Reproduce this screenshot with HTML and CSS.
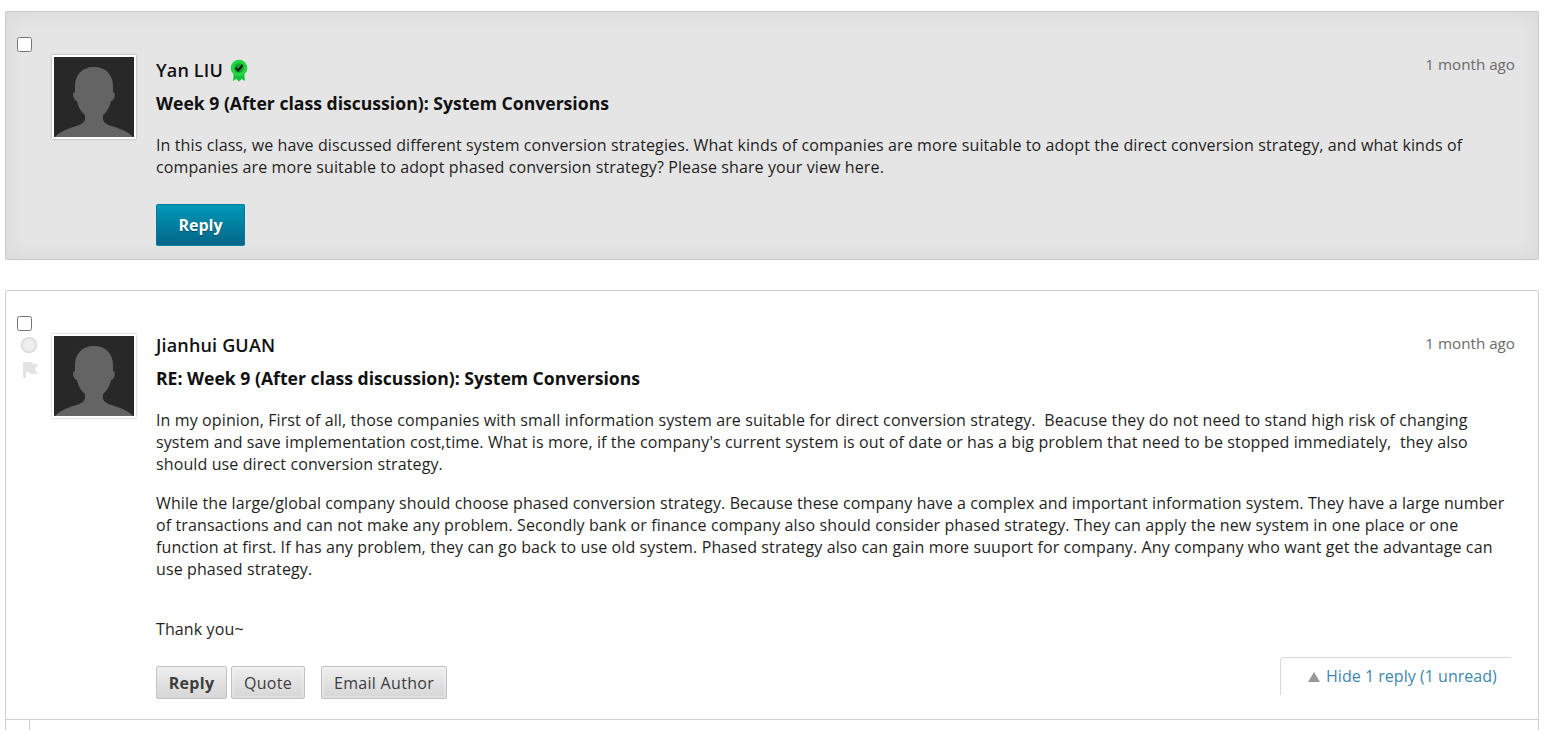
FILE: index.html
```html
<!DOCTYPE html>
<html lang="en">
<head>
<meta charset="utf-8">
<title>Discussion thread</title>
<link rel="stylesheet" href="styles.css">
</head>
<body>
<main class="thread">
  <article class="post post-main">
    <div class="controls"><input type="checkbox" class="check" aria-label="Select post"></div>
    <div class="avatar">
      <svg viewBox="0 0 80 80" width="80" height="80" aria-hidden="true"><rect width="80" height="80" fill="#282828"/><path fill="#646464" d="M40 10C28 10 21 18 21 29V35C19 35 19 38 19.500 40C20 42 21.500 44 23 44C24 50 28 56 31 58V62C31 65 28 67 24 68.500C16 71 6 74 1 80H79C74 74 64 71 56 68.500C52 67 49 65 49 62V58C52 56 56 50 57 44C58.500 44 60 42 60.500 40C61 38 61 35 59 35V29C59 18 52 10 40 10Z"/></svg>
    </div>
    <div class="body">
      <header class="head">
        <h2 class="author">Yan LIU
          <svg class="badge" viewBox="0 0 18 22" width="18" height="23" aria-hidden="true"><path fill="#14c23a" d="M4 12l-1 9.500 3.500-2 2.500 2.500 2.500-2.500 3.500 2-1-9.500z"/><circle cx="9" cy="8.500" r="8.300" fill="#1fd63f"/><circle cx="9" cy="8.500" r="4.800" fill="#14a436"/><path fill="none" stroke="#0c2414" stroke-width="2.400" d="M5.600 8.200l2.600 2.800 4.400-5.600"/></svg>
        </h2>
        <time class="ago">1 month ago</time>
      </header>
      <h3 class="subject">Week 9 (After class discussion): System Conversions</h3>
      <div class="text">
        <p>In this class, we have discussed different system conversion strategies. What kinds of companies are more suitable to adopt the direct conversion strategy, and what kinds of companies are more suitable to adopt phased conversion strategy? Please share your view here.</p>
      </div>
      <div class="actions"><button class="btn-primary" type="button">Reply</button></div>
    </div>
  </article>

  <article class="post post-reply">
    <div class="post-row">
      <div class="controls">
        <input type="checkbox" class="check" aria-label="Select post">
        <span class="dot"></span>
        <svg class="flag" viewBox="0 0 16 16" width="16" height="16" aria-hidden="true"><path fill="#e4e4e4" d="M1 0h9l1 2h5l-3 5 3 5H8l-1-2H4v6H1z"/></svg>
      </div>
      <div class="avatar">
        <svg viewBox="0 0 80 80" width="80" height="80" aria-hidden="true"><rect width="80" height="80" fill="#282828"/><path fill="#646464" d="M40 10C28 10 21 18 21 29V35C19 35 19 38 19.500 40C20 42 21.500 44 23 44C24 50 28 56 31 58V62C31 65 28 67 24 68.500C16 71 6 74 1 80H79C74 74 64 71 56 68.500C52 67 49 65 49 62V58C52 56 56 50 57 44C58.500 44 60 42 60.500 40C61 38 61 35 59 35V29C59 18 52 10 40 10Z"/></svg>
      </div>
      <div class="body">
        <header class="head">
          <h2 class="author">Jianhui GUAN</h2>
          <time class="ago">1 month ago</time>
        </header>
        <h3 class="subject">RE: Week 9 (After class discussion): System Conversions</h3>
        <div class="text">
          <p>In my opinion, First of all, those companies with small information system are suitable for direct conversion strategy.&nbsp; Beacuse they do not need to stand high risk of changing system and save implementation cost,time. What is more, if the company's current system is out of date or has a big problem that need to be stopped immediately,&nbsp; they also should use direct conversion strategy.</p>
          <p>While the large/global company should choose phased conversion strategy. Because these company have a complex and important information system. They have a large number of transactions and can not make any problem. Secondly bank or finance company also should consider phased strategy. They can apply the new system in one place or one function at first. If has any problem, they can go back to use old system. Phased strategy also can gain more suuport for company. Any company who want get the advantage can use phased strategy.</p>
          <p class="thanks">Thank you~</p>
        </div>
        <div class="foot">
          <div class="buttons">
            <button class="btn btn-strong" type="button">Reply</button>
            <button class="btn btn-quote" type="button">Quote</button>
            <button class="btn btn-email" type="button">Email Author</button>
          </div>
          <a class="toggle" href="#"><span class="arrow"></span>Hide 1 reply (1 unread)</a>
        </div>
      </div>
    </div>
    <div class="child"><span class="child-line"></span></div>
  </article>
</main>
</body>
</html>
```
FILE: styles.css
```css
* { box-sizing: border-box; }
html, body { margin: 0; height: 730px; overflow: hidden; background: #fff; }
body { font-family: "Open Sans", "Liberation Sans", sans-serif; font-size: 16px; line-height: 22px; letter-spacing: .115px; color: #1f1f1f; }
.thread { padding: 11px 9px 0 5px; display: flex; flex-direction: column; gap: 30px; }
.post { border: 1px solid #cfcfcf; border-radius: 2px; }
.post-main { display: flex; height: 249px; background: #e5e5e5; box-shadow: inset 0 0 24px rgba(0,0,0,.055); border-color: #c9c9c9; }
.post-reply { background: #fff; height: 450px; display: flex; flex-direction: column; }
.post-row { display: flex; height: 428px; }
.controls { width: 46px; flex: none; padding: 25px 0 0 11px; display: flex; flex-direction: column; align-items: flex-start; }
.check { margin: 0; width: 15px; height: 15px; flex: none; }
.dot { width: 16px; height: 16px; margin: 6px 0 0 4px; border-radius: 50%; background: #efefef; box-shadow: inset 0 0 3px rgba(0,0,0,.25); }
.flag { margin: 9px 0 0 5px; }
.avatar { flex: none; width: 84px; height: 84px; margin-top: 43px; border: 2px solid #fff; box-shadow: 0 0 2px rgba(0,0,0,.35); line-height: 0; }
.avatar svg { display: block; }
.body { flex: 1; min-width: 0; padding: 39px 23px 0 20px; }
.head { display: flex; justify-content: space-between; align-items: flex-start; height: 30px; }
.post-main .head { height: 34px; }
.post-main .author { margin-top: 4px; }
.author { margin: 0; font-size: 18px; line-height: 30px; font-weight: 600; letter-spacing: .16px; color: #111; display: flex; align-items: center; gap: 7px; }
.badge { display: block; }
.ago { margin-top: 2px; font-size: 15.2px; line-height: 22px; letter-spacing: 0; color: #6b6b6b; }
.subject { margin: 5px 0 0; font-size: 17.6px; line-height: 26px; font-weight: 700; letter-spacing: 0; color: #111; }
.text { margin-top: 18px; }
.text p { margin: 0 0 17px; }
.text .thanks { margin-top: 38px; }
.actions { margin-top: 26px; }
.btn-primary { display: block; width: 89px; height: 42px; padding: 0; font: 700 16px/22px "Open Sans", sans-serif; color: #fff; border: 1px solid #05789b; border-bottom-color: #0b88a8; border-radius: 2px; background: linear-gradient(#0099b7, #046587); text-shadow: 0 1px 1px rgba(0,0,0,.4); }
.foot { display: flex; justify-content: space-between; align-items: flex-start; }
.buttons { display: flex; gap: 4px; padding-top: 9px; }
.btn { height: 33px; padding: 0; font: 400 16px/22px "Open Sans", sans-serif; letter-spacing: .3px; color: #3d3d3d; border: 1px solid #c2c2c2; border-radius: 2px; background: linear-gradient(#eee, #d6d6d6); box-shadow: inset 0 0 0 2px rgba(255,255,255,.22); }
.btn-strong { width: 71px; font-weight: 700; box-shadow: none; }
.btn-quote { width: 74px; }
.btn-email { width: 126px; margin-left: 12px; }
.toggle { width: 231px; height: 38px; margin-right: 4px; padding: 7px 0 0 27px; font-size: 16px; line-height: 22px; letter-spacing: .03px; color: #3e87ae; text-decoration: none; border-top: 1px solid #d9d9d9; border-left: 1px solid #d9d9d9; border-top-left-radius: 4px; white-space: nowrap; }
.arrow { display: inline-block; width: 0; height: 0; margin-right: 6px; border-left: 6px solid transparent; border-right: 6px solid transparent; border-bottom: 10px solid #999; }
.child { flex: 1; border-top: 1px solid #cfcfcf; padding-left: 23px; }
.child-line { display: block; width: 1px; height: 100%; background: #cfcfcf; }
```
